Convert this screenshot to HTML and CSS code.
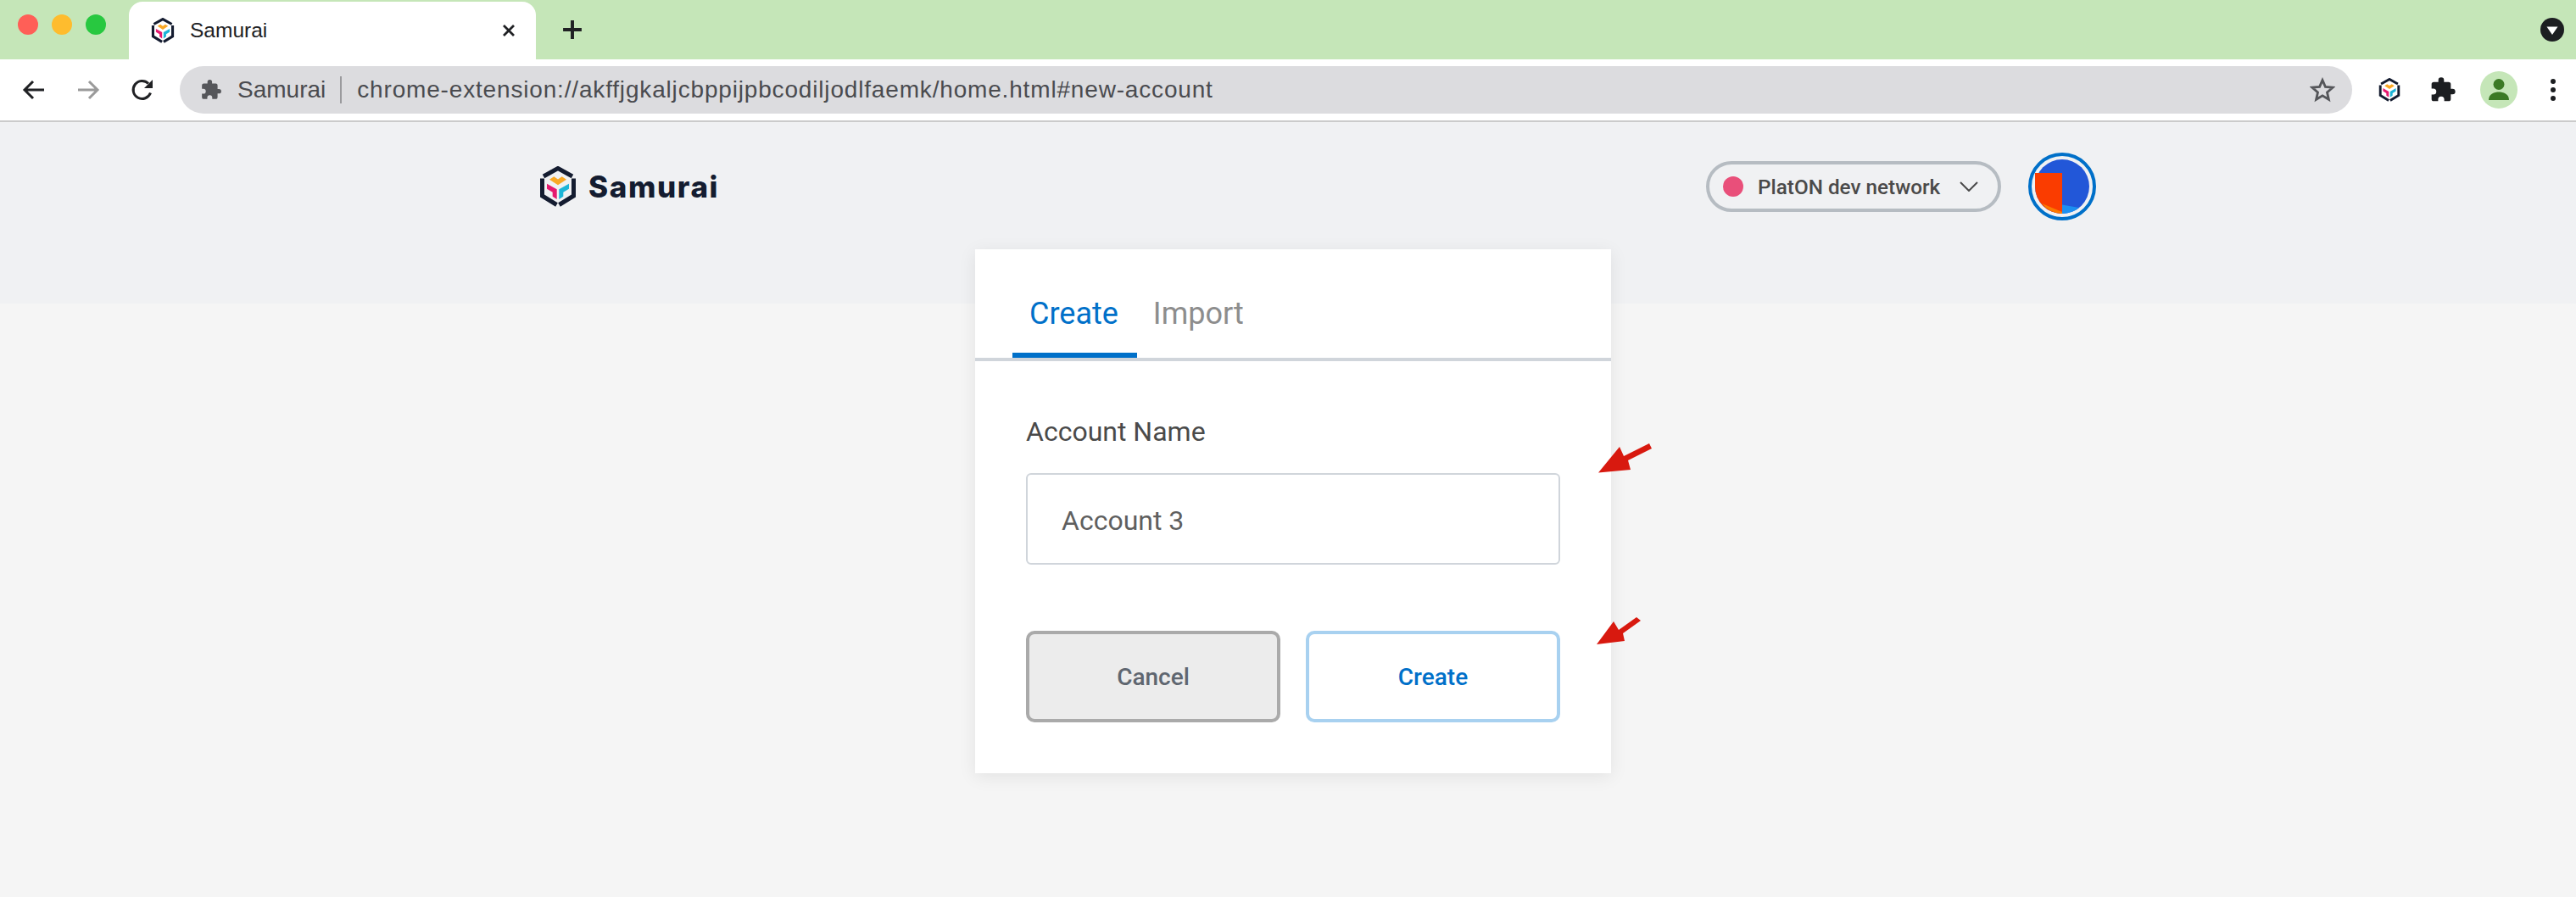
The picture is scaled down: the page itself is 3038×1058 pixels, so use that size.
FILE: index.html
```html
<!DOCTYPE html>
<html lang="en">
<head>
  <meta charset="UTF-8" />
  <title>Samurai</title>
  <link rel="stylesheet" href="styles.css">
</head>
<body>
  <svg class="defs" width="0" height="0">
    <defs>
      <symbol id="logo" viewBox="0 0 42 48">
        <path d="M4 12 L21 2.500 L38 12" fill="none" stroke="#141c30" stroke-width="5"/>
        <path d="M2.500 14.500 V35 L19.500 45.500" fill="none" stroke="#141c30" stroke-width="5"/>
        <path d="M39.500 14.500 V35 L22.500 45.500" fill="none" stroke="#141c30" stroke-width="5"/>
        <path d="M11 15.700 L16.300 12.300 L21 15.500 L25.700 12.300 L31 15.700 L21 22.300 Z" fill="#f9a825"/>
        <path d="M8 20.700 L19.700 27.300 V39 L14.700 35.700 V30.700 L8 26.700 Z" fill="#e5196f"/>
        <path d="M34 20.700 L22.300 27.300 V39 L27.300 35.700 V30.700 L34 26.700 Z" fill="#1cb5d8"/>
      </symbol>
      <symbol id="puzzle" viewBox="0 0 24 24">
        <path d="M20.500 11H19V7a2 2 0 0 0-2-2h-4V3.500a2.500 2.500 0 0 0-5 0V5H4a2 2 0 0 0-2 2v3.800h1.500a2.700 2.700 0 0 1 0 5.400H2V20a2 2 0 0 0 2 2h3.800v-1.500a2.700 2.700 0 0 1 5.400 0V22H17a2 2 0 0 0 2-2v-4h1.500a2.500 2.500 0 0 0 0-5z"/>
      </symbol>
    </defs>
  </svg>

  <div class="tabstrip">
    <div class="traffic">
      <span class="light red"></span>
      <span class="light yellow"></span>
      <span class="light green"></span>
    </div>
    <div class="tab">
      <svg class="favicon"><use href="#logo"/></svg>
      <span class="tab-title">Samurai</span>
      <svg class="tab-close" viewBox="0 0 16 16"><path d="M2 2 L14 14 M14 2 L2 14"/></svg>
    </div>
    <svg class="new-tab" viewBox="0 0 22 22"><path d="M11 1 V21 M1 11 H21"/></svg>
    <div class="tab-search">
      <svg viewBox="0 0 28 28"><circle cx="14" cy="14" r="14" fill="#1c1e21"/><path d="M7.500 10.500 H20.500 L14 20 Z" fill="#fff"/></svg>
    </div>
  </div>

  <div class="toolbar">
    <div class="nav-buttons">
      <svg class="nav-icon" viewBox="0 0 28 28"><path d="M26 14 H3 M13 4 L3 14 L13 24"/></svg>
      <svg class="nav-icon disabled" viewBox="0 0 28 28"><path d="M2 14 H25 M15 4 L25 14 L15 24"/></svg>
      <svg class="nav-icon" viewBox="0 0 28 28"><path d="M23.500 17.500 A10.500 10.500 0 1 1 21 6.500"/><path class="solid" d="M26 2 V12 H16 Z"/></svg>
    </div>
    <div class="omnibox">
      <svg class="omni-puzzle"><use href="#puzzle"/></svg>
      <span class="omni-name">Samurai</span>
      <span class="omni-sep"></span>
      <span class="omni-url">chrome-extension://akffjgkaljcbppijpbcodiljodlfaemk/home.html#new-account</span>
      <svg class="omni-star" viewBox="0 0 30 30"><path d="M15 3.500 L18.400 11.400 L27 12.200 L20.500 17.900 L22.400 26.300 L15 21.900 L7.600 26.300 L9.500 17.900 L3 12.200 L11.600 11.400 Z"/></svg>
    </div>
    <div class="toolbar-actions">
      <svg class="ext-logo"><use href="#logo"/></svg>
      <svg class="ext-puzzle"><use href="#puzzle"/></svg>
      <div class="profile">
        <svg viewBox="0 0 44 44"><circle cx="22" cy="15.500" r="6.500"/><path d="M10 34 C10 26.500 17 24.500 22 24.500 C27 24.500 34 26.500 34 34 Z"/></svg>
      </div>
      <div class="menu-dots"><span></span><span></span><span></span></div>
    </div>
  </div>

  <div class="page">
    <header class="header">
      <div class="brand">
        <svg class="brand-logo"><use href="#logo"/></svg>
        <span class="brand-name">Samurai</span>
      </div>
      <div class="header-right">
        <div class="network">
          <span class="network-dot"></span>
          <span class="network-name">PlatON dev network</span>
          <svg class="network-arrow" viewBox="0 0 22 12"><path d="M1 1 L11 11 L21 1"/></svg>
        </div>
        <div class="account-icon">
          <svg viewBox="0 0 64 64">
            <circle cx="32" cy="32" r="32" fill="#2257d8"/>
            <path d="M32 64 L32 53.500 L52 57 A32 32 0 0 1 32 64 Z" fill="#1c8ff0"/>
            <path d="M0 16 L32 16 L32 64 A32 32 0 0 1 0 32 Z" fill="#fa3c00"/>
            <path d="M8 52 L32 62 L32 64 A32 32 0 0 1 8 52 Z" fill="#fb7a00"/>
          </svg>
        </div>
      </div>
    </header>

    <main class="card">
      <nav class="tabs">
        <a class="tabs-item active">Create</a>
        <a class="tabs-item">Import</a>
      </nav>
      <form class="form">
        <label class="form-label" for="name">Account Name</label>
        <input class="form-input" id="name" type="text" value="Account 3" />
        <div class="form-buttons">
          <button type="button" class="btn btn-cancel">Cancel</button>
          <button type="button" class="btn btn-create">Create</button>
        </div>
      </form>
      <svg class="arrow arrow-name" viewBox="0 0 64 36"><path d="M0 34.500 L25 4 L30 15 L60 0 L63 6 L35 20 L38 31 Z"/></svg>
      <svg class="arrow arrow-create" viewBox="0 0 52 32"><path d="M0 32 L20 5 L26 15 L47 0 L52 4 L31 19 L33 28 Z"/></svg>
    </main>
  </div>
</body>
</html>
```

FILE: styles.css
```css
* {
  box-sizing: border-box;
}
html, body {
  margin: 0;
  height: 100%;
}
body {
  font-family: Roboto, 'Liberation Sans', sans-serif;
  background-color: #f5f5f5;
  color: #333;
  overflow: hidden;
}
.defs {
  display: block;
  height: 0;
}

/* browser tabs */
.tabstrip {
  display: flex;
  align-items: flex-end;
  height: 70px;
  background: #c5e6b8;
}
.traffic {
  display: flex;
  align-self: flex-start;
  gap: 16px;
  width: 152px;
  padding: 17px 0 0 21px;
}
.light {
  width: 24px;
  height: 24px;
  border-radius: 50%;
}
.red { background: #ff5f57; }
.yellow { background: #febc2e; }
.green { background: #28c840; }
.tab {
  display: flex;
  align-items: center;
  width: 480px;
  height: 68px;
  padding: 0 24px 0 26px;
  background: #fff;
  border-radius: 16px 16px 0 0;
}
.favicon {
  width: 28px;
  height: 30px;
  margin-right: 18px;
}
.tab-title {
  flex: 1;
  font-family: 'Liberation Sans', sans-serif;
  font-size: 24.500px;
  color: #202124;
}
.tab-close {
  width: 16px;
  height: 16px;
  fill: none;
  stroke: #202124;
  stroke-width: 2.800;
}
.new-tab {
  align-self: center;
  width: 24px;
  height: 24px;
  margin-left: 31px;
  fill: none;
  stroke: #202124;
  stroke-width: 3.600;
}
.tab-search {
  display: flex;
  align-self: center;
  margin-left: auto;
  padding-right: 14px;
}
.tab-search svg {
  width: 28px;
  height: 28px;
}

/* browser toolbar */
.toolbar {
  display: flex;
  align-items: center;
  height: 74px;
  background: #fff;
  border-bottom: 2px solid #cbcbcb;
}
.nav-buttons {
  display: flex;
  gap: 36px;
  width: 212px;
  padding-left: 26px;
}
.nav-icon {
  width: 28px;
  height: 28px;
  fill: none;
  stroke: #202124;
  stroke-width: 3;
}
.nav-icon.disabled {
  stroke: #9a9a9a;
}
.nav-icon .solid {
  fill: #202124;
  stroke: none;
}
.omnibox {
  display: flex;
  align-items: center;
  width: 2562px;
  height: 56px;
  padding: 0 20px 0 24px;
  background: #dcdcdf;
  border-radius: 28px;
  font-family: 'Liberation Sans', sans-serif;
  font-size: 28px;
  color: #4a4b4f;
}
.omni-puzzle {
  width: 26px;
  height: 26px;
  margin-right: 18px;
  fill: #55565a;
}
.omni-sep {
  width: 2px;
  height: 32px;
  margin: 0 18px 0 17px;
  background: #9a9a9d;
}
.omni-url {
  flex: 1;
  letter-spacing: 0.83px;
}
.omni-star {
  width: 30px;
  height: 30px;
  fill: none;
  stroke: #55565a;
  stroke-width: 2.800;
}
.toolbar-actions {
  display: flex;
  align-items: center;
  flex: 1;
  padding-left: 31px;
}
.ext-logo {
  width: 26px;
  height: 28px;
  margin-right: 34px;
}
.ext-puzzle {
  width: 32px;
  height: 32px;
  margin-right: 28px;
  fill: #1c1e21;
}
.profile {
  width: 44px;
  height: 44px;
  margin-right: 39px;
  background: #c5e6b8;
  border-radius: 50%;
}
.profile svg {
  display: block;
  fill: #3b7a25;
}
.menu-dots {
  display: flex;
  flex-direction: column;
  gap: 4px;
}
.menu-dots span {
  width: 6px;
  height: 6px;
  background: #1c1e21;
  border-radius: 50%;
}

/* extension page */
.header {
  display: flex;
  justify-content: space-between;
  height: 214px;
  padding: 36px 566px 0 637px;
  background: #f0f1f3;
}
.brand {
  display: flex;
  align-items: center;
  gap: 15px;
  height: 80px;
}
.brand-logo {
  width: 42px;
  height: 48px;
}
.brand-name {
  font-family: Inter, sans-serif;
  font-size: 35px;
  font-weight: 800;
  letter-spacing: 1.6px;
  color: #141c30;
}
.header-right {
  display: flex;
  align-items: center;
  gap: 32px;
  height: 80px;
}
.network {
  display: flex;
  align-items: center;
  width: 348px;
  height: 60px;
  padding-left: 16px;
  border: 4px solid #b6bcc2;
  border-radius: 30px;
}
.network-dot {
  width: 24px;
  height: 24px;
  margin-right: 17px;
  background: #e94f7a;
  border-radius: 50%;
}
.network-name {
  font-size: 24.300px;
  font-weight: 500;
  color: #4a4a4a;
}
.network-arrow {
  width: 22px;
  height: 12px;
  margin-left: 23px;
  fill: none;
  stroke: #4a4a4a;
  stroke-width: 2;
}
.account-icon {
  width: 80px;
  height: 80px;
  padding: 4px;
  border: 4px solid #0070c9;
  border-radius: 50%;
}
.account-icon svg {
  display: block;
  width: 64px;
  height: 64px;
}

/* card */
.card {
  position: relative;
  width: 750px;
  height: 618px;
  margin: -64px 0 0 1150px;
  background: #fff;
  box-shadow: 0 4px 20px rgba(0,0,0,0.08);
}
.tabs {
  display: flex;
  height: 132px;
  padding: 0 0 0 44px;
  border-bottom: 4px solid #d0d5db;
}
.tabs-item {
  height: 128px;
  padding: 51px 21px 0 20px;
  font-size: 36px;
  line-height: 50px;
  color: #8d8d8d;
}
.tabs-item.active {
  padding-right: 22px;
  color: #0070c9;
  border-bottom: 6px solid #0070c9;
}
.tabs-item.active + .tabs-item {
  padding-left: 19px;
}
.form {
  display: flex;
  flex-direction: column;
  padding: 64px 60px 0;
}
.form-label {
  font-size: 32px;
  line-height: 38px;
  color: #4a4a4a;
}
.form-input {
  width: 630px;
  height: 108px;
  margin-top: 30px;
  padding: 3px 40px 0;
  border: 2px solid #d0d5db;
  border-radius: 6px;
  font-family: inherit;
  font-size: 32px;
  color: #5f5f5f;
  background: #fff;
}
.form-buttons {
  display: flex;
  gap: 30px;
  margin-top: 78px;
}
.btn {
  width: 300px;
  height: 108px;
  border-radius: 10px;
  font-family: inherit;
  font-size: 28px;
  font-weight: 500;
}
.btn-cancel {
  background: #ececec;
  border: 4px solid #aaa;
  color: #5f6670;
}
.btn-create {
  background: #fff;
  border: 4px solid #a8d1f0;
  color: #0070c9;
}

/* red annotation arrows */
.arrow {
  position: absolute;
  fill: #d8190f;
}
.arrow-name {
  left: 735px;
  top: 229px;
  width: 64px;
  height: 36px;
}
.arrow-create {
  left: 733px;
  top: 434px;
  width: 52px;
  height: 32px;
}
```
